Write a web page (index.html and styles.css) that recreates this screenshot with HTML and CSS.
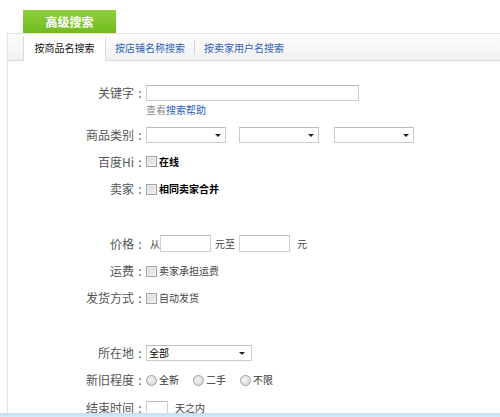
FILE: index.html
```html
<!DOCTYPE html>
<html lang="zh-CN">
<head>
<meta charset="utf-8">
<title>高级搜索</title>
<link rel="stylesheet" href="styles.css">
</head>
<body>
<div class="page">
  <div class="main-tab">高级搜索</div>
  <div class="panel">
    <div class="tabbar">
      <span class="tab active">按商品名搜索</span>
      <a class="tab link">按店铺名称搜索</a>
      <span class="sep"></span>
      <a class="tab link">按卖家用户名搜索</a>
    </div>
    <div class="form">
      <div class="row row-kw">
        <span class="label">关键字</span><span class="colon">:</span>
        <span class="input input-kw"></span>
      </div>
      <div class="row row-help">
        <span class="help"><span class="muted">查看</span><a class="blue">搜索帮助</a></span>
      </div>
      <div class="row row-cat">
        <span class="label">商品类别</span><span class="colon">:</span>
        <span class="select sel-cat"><i class="arrow"></i></span>
        <span class="select sel-cat sel-gap1"><i class="arrow"></i></span>
        <span class="select sel-cat sel-gap2"><i class="arrow"></i></span>
      </div>
      <div class="row">
        <span class="label">百度Hi</span><span class="colon">:</span>
        <span class="check"></span><span class="val strong">在线</span>
      </div>
      <div class="row">
        <span class="label">卖家</span><span class="colon">:</span>
        <span class="check"></span><span class="val strong">相同卖家合并</span>
      </div>
      <div class="row"></div>
      <div class="row">
        <span class="label">价格</span><span class="colon">:</span>
        <span class="val from">从</span>
        <span class="input input-price"></span>
        <span class="val to">元至</span>
        <span class="input input-price"></span>
        <span class="val yuan">元</span>
      </div>
      <div class="row">
        <span class="label">运费</span><span class="colon">:</span>
        <span class="check"></span><span class="val">卖家承担运费</span>
      </div>
      <div class="row">
        <span class="label">发货方式</span><span class="colon">:</span>
        <span class="check"></span><span class="val">自动发货</span>
      </div>
      <div class="row"></div>
      <div class="row">
        <span class="label">所在地</span><span class="colon">:</span>
        <span class="select sel-loc"><span class="sel-text">全部</span><i class="arrow"></i></span>
      </div>
      <div class="row">
        <span class="label">新旧程度</span><span class="colon">:</span>
        <span class="radio"></span><span class="val opt">全新</span>
        <span class="radio"></span><span class="val opt">二手</span>
        <span class="radio"></span><span class="val opt">不限</span>
      </div>
      <div class="row">
        <span class="label">结束时间</span><span class="colon">:</span>
        <span class="input input-days"></span>
        <span class="val days">天之内</span>
      </div>
    </div>
  </div>
</div>
<div class="bottom-bar"></div>
</body>
</html>
```

FILE: styles.css
```css
html, body {
  margin: 0;
  padding: 0;
  background: #fff;
}
body {
  width: 500px;
  height: 417px;
  overflow: hidden;
  font-family: "Noto Sans CJK SC", "Noto Sans", sans-serif;
  color: #555;
}
.page {
  padding-top: 10px;
}
.main-tab {
  margin-left: 23px;
  width: 93px;
  height: 23px;
  line-height: 23px;
  text-align: center;
  color: #fff;
  font-size: 12px;
  font-weight: bold;
  background: linear-gradient(#8ed13b, #73ba20);
}
.panel {
  margin-left: 7px;
  border-left: 1px solid #e4e4e4;
  height: 400px;
}
.tabbar {
  height: 26px;
  border-top: 1px solid #e2e2e2;
  border-bottom: 1px solid #d9d9d9;
  background: linear-gradient(#fdfdfd, #f1f1f1);
  display: flex;
  align-items: flex-end;
  padding-left: 15px;
  box-sizing: content-box;
}
.tab {
  font-size: 10px;
  line-height: 24px;
  height: 24px;
}
.tab.active {
  width: 81px;
  text-align: center;
  background: #fff;
  color: #111;
  border-left: 1px solid #dcdcdc;
  border-right: 1px solid #dcdcdc;
  margin-bottom: -1px;
  height: 25px;
}
.tab.link {
  color: #2f5fb7;
  margin-left: 9px;
  height: 25px;
  line-height: 25px;
  align-self: center;
}
.sep {
  width: 1px;
  height: 14px;
  background: #d4d4d4;
  margin-left: 9px;
  align-self: center;
}
.sep + .tab.link {
  margin-left: 9px;
}
.form {
  padding-top: 22px;
  padding-left: 66px;
}
.row {
  display: flex;
  align-items: center;
  height: 27.3px;
}
.row-kw {
  height: 20px;
}
.row-help {
  height: 14px;
  padding-left: 72px;
}
.row-cat {
  margin-top: 4px;
}
.label {
  width: 60px;
  text-align: right;
  font-size: 12px;
  line-height: 14px;
  color: #555;
  white-space: nowrap;
}
.colon {
  width: 12px;
  text-align: center;
  font-size: 12px;
  line-height: 14px;
  color: #555;
}
.val {
  font-size: 10px;
  line-height: 12px;
  color: #444;
  white-space: nowrap;
}
.strong {
  color: #000;
  font-weight: bold;
}
.help {
  font-size: 10px;
  line-height: 12px;
}
.muted {
  color: #8a8a8a;
}
.blue {
  color: #2c5bb3;
}
.input {
  display: block;
  box-sizing: border-box;
  height: 16px;
  border: 1px solid #cfcfcf;
  border-top-color: #b8b8b8;
  background: #fff;
}
.input-kw {
  width: 213px;
}
.input-price {
  width: 51px;
  height: 17px;
}
.input-days {
  width: 22px;
  height: 17px;
  margin-top: 4px;
}
.from {
  width: 14px;
  text-align: right;
}
.to {
  margin-left: 4px;
  margin-right: 4px;
}
.yuan {
  margin-left: 7px;
}
.days {
  margin-left: 7px;
}
.select {
  position: relative;
  display: flex;
  align-items: center;
  box-sizing: border-box;
  height: 16px;
  border: 1px solid #cccccc;
  border-top-color: #bdbdbd;
  background: #fff;
}
.sel-cat {
  width: 80px;
}
.sel-gap1 {
  margin-left: 13px;
}
.sel-gap2 {
  margin-left: 15px;
}
.sel-loc {
  width: 106px;
}
.sel-text {
  font-size: 10px;
  line-height: 12px;
  color: #000;
  padding-left: 2px;
}
.arrow {
  position: absolute;
  right: 4px;
  top: 6px;
  width: 0;
  height: 0;
  border-left: 3px solid transparent;
  border-right: 3px solid transparent;
  border-top: 3px solid #222;
}
.sel-loc .arrow {
  right: 6px;
}
.check {
  display: block;
  box-sizing: border-box;
  width: 11px;
  height: 11px;
  border: 1px solid #a3a3a3;
  background: linear-gradient(135deg, #d6d6d6, #f3f3f3);
  box-shadow: inset 0 0 0 1px #eeeeee;
  margin-right: 2px;
}
.radio {
  display: block;
  box-sizing: border-box;
  width: 11px;
  height: 11px;
  border-radius: 50%;
  border: 1px solid #a0a0a0;
  background: radial-gradient(circle at 40% 40%, #f5f5f5, #d0d0d0);
  margin-right: 2px;
}
.opt {
  width: 20px;
  margin-right: 14px;
  color: #333;
}
.bottom-bar {
  position: fixed;
  left: 0;
  right: 0;
  bottom: 0;
  height: 4px;
  background: linear-gradient(#bfe0f5, #d6ebf8);
}
```
